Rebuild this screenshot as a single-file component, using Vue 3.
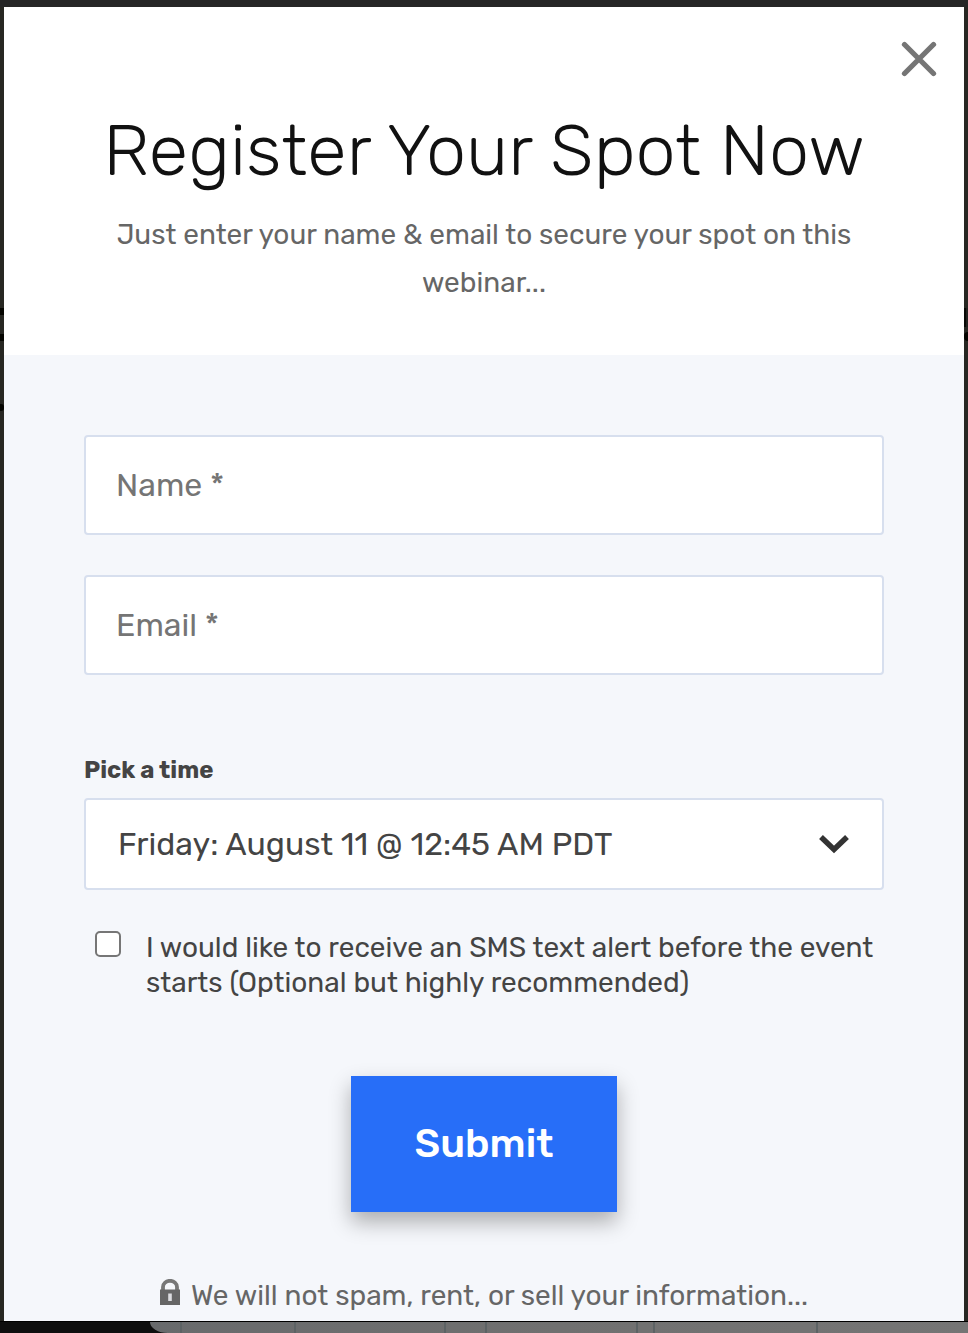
<template>
  <div class="page">
    <div class="backdrop-side">
      <span class="mark first" />
      <span class="mark second" />
      <span class="mark third" />
    </div>
    <section class="modal">
      <header class="modal-header">
        <button class="close" type="button" aria-label="Close">
          <svg viewBox="0 0 36 36" width="36" height="36">
            <path d="M3.5 3.5 32.5 32.5M32.5 3.5 3.5 32.5" />
          </svg>
        </button>
        <h1 class="title">Register Your Spot Now</h1>
        <p class="subtitle">
          Just enter your name &amp; email to secure your spot on this<br>
          webinar...
        </p>
      </header>

      <form class="form" @submit.prevent>
        <input v-model="name" class="field" type="text" placeholder="Name *">
        <input v-model="email" class="field" type="email" placeholder="Email *">

        <label class="label" for="time">Pick a time</label>
        <div class="select-wrap">
          <select id="time" v-model="time" class="select">
            <option v-for="t in times" :key="t" :value="t">{{ t }}</option>
          </select>
          <svg class="chevron" viewBox="0 0 30 20" width="30" height="20">
            <path d="M2 3 15 15.5 28 3" />
          </svg>
        </div>

        <label class="sms">
          <input v-model="sms" class="checkbox" type="checkbox">
          <span class="sms-text">
            I would like to receive an SMS text alert before the event<br>
            starts (Optional but highly recommended)
          </span>
        </label>

        <button class="submit" type="submit">Submit</button>

        <p class="privacy">
          <svg class="lock" viewBox="0 0 20 26" width="20" height="26">
            <path class="shackle" d="M3 12V8a7 6.2 0 0 1 14 0v4" />
            <path d="M0 10.5h20V26H0z" />
            <path class="keyhole" d="M8.2 14.5h3.6v7.5H8.2z" />
          </svg>
          <span>We will not spam, rent, or sell your information...</span>
        </p>
      </form>
    </section>
    <div class="backdrop-side">
      <span class="mark fourth" />
      <span class="mark fifth" />
    </div>
    <div class="backdrop-bottom">
      <div class="dark-edge" />
      <div class="panel">
        <i v-for="(w, i) in columns" :key="i" :style="{ width: `${w}px` }" />
      </div>
    </div>
  </div>
</template>

<script setup>
import { ref } from 'vue'

const times = ['Friday: August 11 @ 12:45 AM PDT']
const name = ref('')
const email = ref('')
const time = ref(times[0])
const sms = ref(false)

const columns = [32, 114, 150, 41, 151, 17, 163]
</script>

<style>
body {
  margin: 0;
  background: #262626;
}
</style>

<style scoped>
* {
  box-sizing: border-box;
}
.page {
  display: grid;
  grid-template-columns: 4px 960px 4px;
  grid-template-rows: 1314px 12px;
  width: 968px;
  height: 1333px;
  padding-top: 7px;
  overflow: hidden;
  background: #262626;
  font-family: Rubik, Roboto, sans-serif;
  color: #444;
}
.backdrop-side {
  position: relative;
  background: #272722;
}
.mark {
  position: absolute;
  left: 0;
  width: 4px;
  height: 7px;
  background: #050500;
}
.first { top: 301px; }
.second { top: 327px; }
.third { top: 397px; border-radius: 0 3px 3px 0; }
.fourth { top: 301px; height: 19px; border-left: 2px solid #090906; background: #22221f; }
.fifth { top: 325px; height: 9px; border-radius: 4px 0 0 4px; }
.modal {
  background: #f5f7fb;
}
.modal-header {
  position: relative;
  height: 348px;
  padding-top: 102px;
  background: #fff;
  text-align: center;
}
.close {
  position: absolute;
  top: 34px;
  right: 27px;
  width: 36px;
  height: 36px;
  padding: 0;
  border: 0;
  background: none;
}
.close svg {
  display: block;
  fill: none;
  stroke: #757575;
  stroke-width: 5.3;
  stroke-linecap: round;
}
.title {
  margin: 0;
  font-size: 72px;
  font-weight: 300;
  line-height: 84px;
  color: #111;
  white-space: nowrap;
}
.subtitle {
  margin: 18px 0 0;
  font-size: 28px;
  line-height: 48px;
  color: #666;
}
.form {
  display: flex;
  flex-direction: column;
  padding: 80px 80px 0;
}
.field {
  width: 100%;
  height: 100px;
  margin: 0 0 40px;
  padding: 0 30px;
  border: 2px solid #d7dfee;
  border-radius: 4px;
  outline: 0;
  background: #fff;
  font: 400 32px/40px Rubik, Roboto, sans-serif;
}
.field::placeholder {
  color: #757575;
  opacity: 1;
}
.label {
  height: 28px;
  margin-top: 41px;
  font-size: 24px;
  font-weight: 700;
  line-height: 28px;
}
.select-wrap {
  display: grid;
  margin-top: 14px;
}
.select {
  grid-area: 1 / 1;
  width: 100%;
  height: 92px;
  padding: 0 32px;
  appearance: none;
  border: 2px solid #d7dfee;
  border-radius: 4px;
  background: #fff;
  color: #444;
  font: 400 32px/40px Rubik, Roboto, sans-serif;
}
.chevron {
  grid-area: 1 / 1;
  place-self: center end;
  margin-right: 35px;
  pointer-events: none;
  fill: none;
  stroke: #333;
  stroke-width: 5.5;
}
.sms {
  display: flex;
  align-items: flex-start;
  margin-top: 40px;
  padding-left: 11px;
}
.checkbox {
  flex: none;
  width: 26px;
  height: 26px;
  margin: 1px 25px 0 0;
  appearance: none;
  border: 2px solid #767676;
  border-radius: 5px;
  background: #fff;
}
.sms-text {
  font-size: 28px;
  line-height: 35px;
  white-space: nowrap;
}
.submit {
  align-self: center;
  width: 266px;
  height: 136px;
  margin-top: 76px;
  padding: 0;
  border: 0;
  background: #276ef8;
  box-shadow: 0 10px 20px rgba(0, 0, 0, 0.3);
  color: #fff;
  font: 500 40px/48px Rubik, Roboto, sans-serif;
}
.privacy {
  display: flex;
  align-items: center;
  margin: 67px 0 0 76px;
  font-size: 28px;
  line-height: 34px;
  color: #666;
  white-space: nowrap;
}
.lock {
  margin: -8px 11px 0 0;
  fill: #666;
}
.shackle {
  fill: none;
  stroke: #777;
  stroke-width: 3.8;
}
.keyhole {
  fill: #dcdde0;
}
.backdrop-bottom {
  grid-column: 1 / -1;
  display: flex;
  border-top: 1px solid #000;
  background: #0e0e0e;
}
.dark-edge {
  width: 150px;
}
.panel {
  display: flex;
  flex: 1;
  background: linear-gradient(90deg, #686a6c, #707070 50%, #757575);
  border-bottom-left-radius: 18px 11px;
}
.panel i {
  flex: none;
  border-right: 2px solid #5c6264;
}
</style>
